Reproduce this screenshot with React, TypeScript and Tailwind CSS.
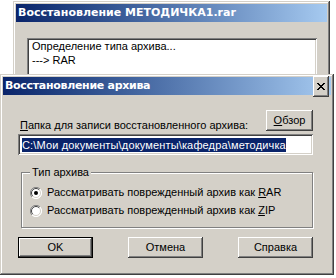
import React from 'react';

const frame =
  'shadow-[inset_-1px_-1px_#404040,inset_1px_1px_#d4d0c8,inset_-2px_-2px_#808080,inset_2px_2px_#ffffff]';
const btnRaised =
  'shadow-[inset_-1px_-1px_#404040,inset_1px_1px_#ffffff,inset_-2px_-2px_#808080,inset_2px_2px_#d4d0c8]';
const btnDefault =
  'shadow-[inset_-1px_-1px_#000000,inset_1px_1px_#000000,inset_-2px_-2px_#404040,inset_2px_2px_#ffffff,inset_-3px_-3px_#808080,inset_3px_3px_#d4d0c8]';
const sunken =
  'shadow-[inset_1px_1px_#808080,inset_-1px_-1px_#ffffff,inset_2px_2px_#404040,inset_-2px_-2px_#d4d0c8]';

function CloseGlyph() {
  const rows = ['XX....XX', '.XX..XX.', '..XXXX..', '...XX...', '..XXXX..', '.XX..XX.', 'XX....XX'];
  return (
    <svg width="8" height="7" viewBox="0 0 8 7" shapeRendering="crispEdges">
      {rows.map((r, y) =>
        r.split('').map((c, x) => (c === 'X' ? <rect key={`${x}-${y}`} x={x} y={y} width="1" height="1" fill="#000" /> : null))
      )}
    </svg>
  );
}

function Radio({ checked }: { checked?: boolean }) {
  return (
    <svg width="12" height="12" viewBox="0 0 12 12" className="shrink-0">
      <circle cx="6" cy="6" r="5.5" fill="#fff" />
      <path d="M10 2 A5.5 5.5 0 0 0 2 10" fill="none" stroke="#808080" strokeWidth="1" />
      <path d="M10 2 A5.5 5.5 0 0 1 2 10" fill="none" stroke="#ffffff" strokeWidth="1" />
      <path d="M9.2 2.8 A4.5 4.5 0 0 0 2.8 9.2" fill="none" stroke="#404040" strokeWidth="1" />
      <path d="M9.2 2.8 A4.5 4.5 0 0 1 2.8 9.2" fill="none" stroke="#d4d0c8" strokeWidth="1" />
      {checked && <circle cx="6" cy="6" r="2" fill="#000" />}
    </svg>
  );
}

function Btn({ children, def, className = '' }: { children: React.ReactNode; def?: boolean; className?: string }) {
  return (
    <div
      className={`flex items-center justify-center h-[21px] bg-[#d4d0c8] text-black ${def ? btnDefault : btnRaised} ${className}`}
    >
      {children}
    </div>
  );
}

export default function App() {
  return (
    <div className="relative w-[336px] h-[278px] bg-white overflow-hidden font-['Liberation_Sans',sans-serif] text-[11px] text-black">
      {/* window behind */}
      <div className={`absolute left-[13px] top-[1px] w-[317px] h-[110px] bg-[#d4d0c8] p-[3px] ${frame}`}>
        <div className="h-[18px] flex items-center pl-[2px] bg-linear-to-r from-[#0a246a] to-[#a6caf0]">
          <span className="text-white font-bold text-[11px] font-['DejaVu_Sans',sans-serif]">
            Восстановление МЕТОДИЧКА1.rar
          </span>
        </div>
        <div className={`mt-[16px] ml-[11px] mr-[10px] h-[60px] bg-white pl-[5px] pt-[1px] leading-[14px] ${sunken}`}>
          <div>Определение типа архива...</div>
          <div>---&gt; RAR</div>
        </div>
      </div>

      {/* dialog */}
      <div className={`absolute left-0 top-[74px] w-[334px] h-[201px] bg-[#d4d0c8] p-[3px] ${frame}`}>
        <div className="h-[18px] flex items-center justify-between pl-[2px] pr-[2px] bg-linear-to-r from-[#0a246a] to-[#a6caf0]">
          <span className="text-white font-bold text-[11px] font-['DejaVu_Sans',sans-serif] tracking-[-0.3px]">
            Восстановление архива
          </span>
          <Btn className="w-[16px] h-[14px]">
            <CloseGlyph />
          </Btn>
        </div>

        <div className="flex flex-col pl-[15px] pr-[18px]">
          <div className="mt-[15px] flex justify-between">
            <div className="pt-[9px] pl-[2px] leading-[13px]">
              <span className="underline">П</span>апка для записи восстановленного архива:
            </div>
            <Btn className="w-[47px]">
              <span className="underline">О</span>бзор
            </Btn>
          </div>

          <div className={`mt-[2px] h-[21px] bg-white flex items-center pl-[4px] ${sunken}`}>
            <span className="bg-[#0a246a] text-white leading-[14px] tracking-[0.15px]">
              C:\Мои документы\документы\кафедра\методичка
            </span>
          </div>

          <div className="relative mt-[17px] ml-[3px] h-[56px] border border-[#808080] shadow-[inset_1px_1px_#ffffff,1px_1px_#ffffff] pl-[8px] pt-[13px] flex flex-col gap-[5px]">
            <span className="absolute -top-[7px] left-[8px] px-[2px] bg-[#d4d0c8] leading-[13px]">Тип архива</span>
            <div className="flex items-center gap-[5px] h-[13px]">
              <Radio checked />
              <span>
                Рассматривать поврежденный архив как <span className="underline">R</span>AR
              </span>
            </div>
            <div className="flex items-center gap-[5px] h-[13px]">
              <Radio />
              <span>
                Рассматривать поврежденный архив как <span className="underline">Z</span>IP
              </span>
            </div>
          </div>

          <div className="mt-[9px] flex justify-between">
            <Btn def className="w-[75px]">OK</Btn>
            <Btn className="w-[75px]">Отмена</Btn>
            <Btn className="w-[75px]">Справка</Btn>
          </div>
        </div>
      </div>
    </div>
  );
}
